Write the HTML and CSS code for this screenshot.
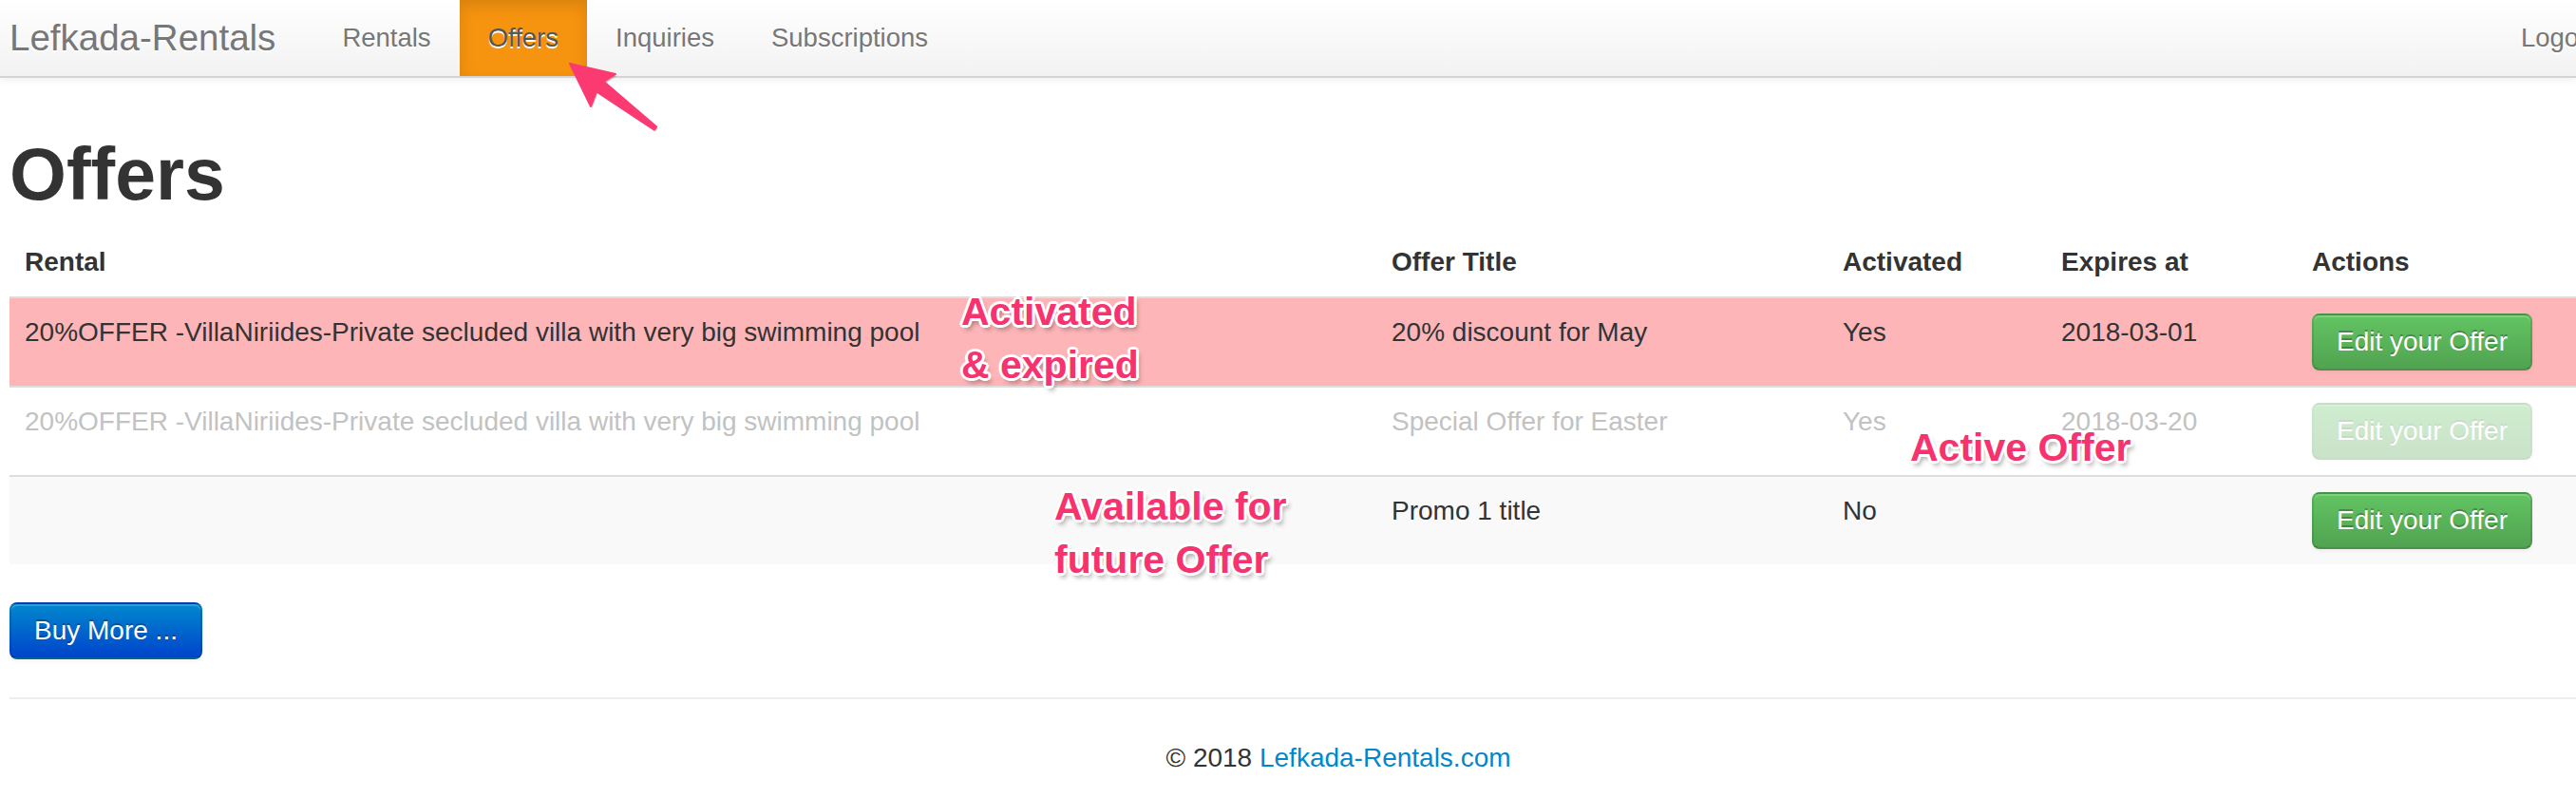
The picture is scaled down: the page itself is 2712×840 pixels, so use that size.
FILE: index.html
```html
<!DOCTYPE html>
<html lang="en">
<head>
<meta charset="utf-8">
<title>Offers - Lefkada-Rentals</title>
<link rel="stylesheet" href="styles.css">
</head>
<body>
<div class="navbar">
  <div class="navbar-inner">
    <a class="brand" href="#">Lefkada-Rentals</a>
    <ul class="nav">
      <li><a href="#">Rentals</a></li>
      <li class="active"><a href="#">Offers</a></li>
      <li><a href="#">Inquiries</a></li>
      <li><a href="#">Subscriptions</a></li>
    </ul>
    <ul class="nav nav-right">
      <li><a href="#">Logout</a></li>
    </ul>
  </div>
</div>

<div class="container">
  <h1>Offers</h1>
  <table class="table">
    <colgroup>
      <col class="c-rental">
      <col class="c-title">
      <col class="c-act">
      <col class="c-exp">
      <col class="c-actions">
    </colgroup>
    <thead>
      <tr>
        <th>Rental</th>
        <th>Offer Title</th>
        <th>Activated</th>
        <th>Expires at</th>
        <th>Actions</th>
      </tr>
    </thead>
    <tbody>
      <tr class="expired">
        <td>20%OFFER -VillaNiriides-Private secluded villa with very big swimming pool</td>
        <td>20% discount for May</td>
        <td>Yes</td>
        <td>2018-03-01</td>
        <td><a class="btn btn-success" href="#">Edit your Offer</a></td>
      </tr>
      <tr class="faded">
        <td>20%OFFER -VillaNiriides-Private secluded villa with very big swimming pool</td>
        <td>Special Offer for Easter</td>
        <td>Yes</td>
        <td>2018-03-20</td>
        <td><a class="btn btn-success" href="#">Edit your Offer</a></td>
      </tr>
      <tr class="striped">
        <td></td>
        <td>Promo 1 title</td>
        <td>No</td>
        <td></td>
        <td><a class="btn btn-success" href="#">Edit your Offer</a></td>
      </tr>
    </tbody>
  </table>

  <div class="buy"><a class="btn btn-primary" href="#">Buy More ...</a></div>

  <hr>

  <footer class="footer">
    <p>&copy; 2018 <a href="#">Lefkada-Rentals.com</a></p>
  </footer>
</div>

<div class="note n1">Activated<br>&amp; expired</div>
<div class="note n2">Active Offer</div>
<div class="note n3">Available for<br>future Offer</div>

<svg class="arrow" width="110" height="85" viewBox="0 0 110 85" xmlns="http://www.w3.org/2000/svg">
  <polygon points="10,7 58,18 45.8,25.9 101.2,73.4 98.8,76.6 38,36.3 32,52" fill="rgba(0,0,0,0.18)" transform="translate(1.5,2)"/>
  <polygon points="10,7 58,18 45.8,25.9 101.2,73.4 98.8,76.6 38,36.3 32,52" fill="#fb3a72" stroke="#fb3a72" stroke-width="2" stroke-linejoin="round"/>
</svg>
</body>
</html>
```

FILE: styles.css
```css
html, body {
  margin: 0;
  padding: 0;
}

body {
  position: relative;
  width: 2712px;
  height: 840px;
  overflow: hidden;
  background: #fff;
  color: #333;
  font-family: "Liberation Sans", Arial, Helvetica, sans-serif;
  font-size: 28px;
  line-height: 40px;
}

/* Navbar */
.navbar {
  height: 80px;
  overflow: hidden;
  background: linear-gradient(#ffffff, #f2f2f2);
  border-bottom: 2px solid #d4d4d4;
  box-shadow: 0 2px 8px rgba(0, 0, 0, 0.07);
}

.navbar-inner {
  display: flex;
  width: 2758px;
  padding-left: 10px;
}

.brand {
  display: block;
  padding: 20px 40px 20px 0;
  font-size: 38.5px;
  line-height: 40px;
  color: #777;
  text-decoration: none;
  text-shadow: 0 2px 0 #fff;
}

.nav {
  display: flex;
  margin: 0;
  padding: 0;
  list-style: none;
}

.nav a {
  display: block;
  padding: 20px 30px;
  font-size: 27.5px;
  line-height: 40px;
  color: #777;
  text-decoration: none;
  text-shadow: 0 2px 0 #fff;
}

.nav .active a {
  background: #f7940f;
  color: #555;
  box-shadow: inset 0 6px 16px rgba(0, 0, 0, 0.13);
}

.nav-right {
  margin-left: auto;
}

/* Content */
.container {
  width: 2798px;
  margin-left: 10px;
}

h1 {
  margin: 61px 0 17px;
  font-size: 77px;
  line-height: 80px;
  font-weight: bold;
  color: #333;
}

.table {
  width: 100%;
  table-layout: fixed;
  border-collapse: collapse;
  border-spacing: 0;
  margin-bottom: 40px;
}

.c-rental { width: 1439px; }
.c-title { width: 475px; }
.c-act { width: 230px; }
.c-exp { width: 264px; }
.c-actions { width: 390px; }

.table th,
.table td {
  padding: 16px;
  text-align: left;
  vertical-align: top;
  line-height: 40px;
  white-space: nowrap;
}

.table th {
  font-weight: bold;
}

.table td {
  border-top: 2px solid #ddd;
}

.expired td {
  background: #feb5b8;
}

.faded td {
  color: #c2c2c2;
}

.faded .btn {
  opacity: 0.3;
}

.striped td {
  background: #f9f9f9;
}

/* Buttons */
.btn {
  display: inline-block;
  padding: 8px 24px;
  font-size: 28px;
  line-height: 40px;
  color: #fff;
  text-decoration: none;
  text-shadow: 0 -2px 0 rgba(0, 0, 0, 0.25);
  border: 2px solid;
  border-radius: 8px;
  box-shadow: inset 0 2px 0 rgba(255, 255, 255, 0.2), 0 2px 4px rgba(0, 0, 0, 0.05);
}

.btn-success {
  background: linear-gradient(#62c462, #51a351);
  border-color: rgba(0, 0, 0, 0.1) rgba(0, 0, 0, 0.1) rgba(0, 0, 0, 0.25);
}

.btn-primary {
  background: linear-gradient(#0088cc, #0044cc);
  border-color: rgba(0, 0, 0, 0.1) rgba(0, 0, 0, 0.1) rgba(0, 0, 0, 0.25);
}

hr {
  margin: 40px 0;
  border: 0;
  border-top: 2px solid #eee;
  border-bottom: 2px solid #fff;
}

.footer {
  text-align: center;
}

.footer p {
  margin: 0;
}

.footer a {
  color: #0088cc;
  text-decoration: none;
}

/* Annotations */
.note {
  position: absolute;
  font-size: 41px;
  line-height: 56px;
  font-weight: bold;
  color: #f7336f;
  white-space: nowrap;
  text-shadow:
    2px 0 0 #fff, -2px 0 0 #fff, 0 2px 0 #fff, 0 -2px 0 #fff,
    2px 2px 0 #fff, -2px -2px 0 #fff, 2px -2px 0 #fff, -2px 2px 0 #fff,
    3px 0 0 #fff, -3px 0 0 #fff, 0 3px 0 #fff, 0 -3px 0 #fff,
    3px 5px 5px rgba(0, 0, 0, 0.35);
}

.n1 { top: 300px; left: 1012px; }
.n2 { top: 443px; left: 2011px; }
.n3 { top: 505px; left: 1110px; }

.arrow {
  position: absolute;
  left: 590px;
  top: 60px;
}
```
